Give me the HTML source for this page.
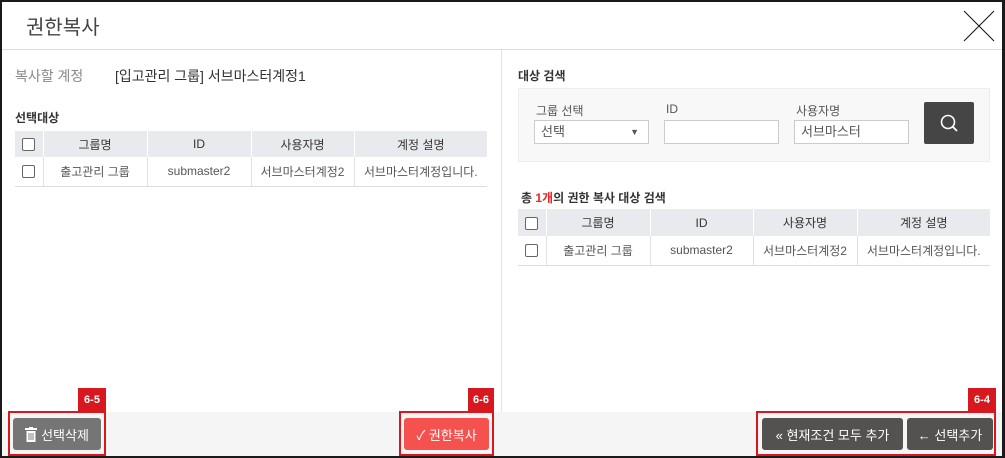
<!DOCTYPE html><html><head><meta charset="utf-8"><style>
*{box-sizing:border-box;margin:0;padding:0}
body{width:1005px;height:458px;font-family:"Liberation Sans","Noto Sans CJK KR",sans-serif;background:#1a1a1a;position:relative;overflow:hidden;color:#333}
.a{position:absolute}
.win{left:2px;top:2px;width:1000px;height:454px;background:#fff}
table{border-collapse:collapse;font-size:12px;color:#555;table-layout:fixed}
th{background:#e9eaee;font-weight:normal;height:26px;border-left:1px solid #fff;color:#333}
td{height:29px;text-align:center;border-left:1px solid #e2e2e2;border-bottom:1px solid #ddd}
th:first-child,td:first-child{border-left:none}
.cb{display:inline-block;width:13px;height:13px;border:1px solid #666;border-radius:2px;vertical-align:middle;background:#fff}
.inp{height:24px;border:1px solid #ccc;background:#fff;font-size:13px;padding:0 6px;line-height:22px;color:#555}
.lbl{font-size:12px;color:#555}
.btn{color:#fff;font-size:13px;border-radius:3px;display:flex;align-items:center;justify-content:center}
.tag{background:#d7191f;color:#fff;font-size:11px;font-weight:bold;text-align:center;line-height:24px}
.out{border:2px solid #d7191f}
</style></head><body>
<div class="a win"></div>
<div class="a" style="left:26px;top:11px;font-size:20px;color:#444">권한복사</div>
<svg class="a" style="left:962px;top:9px" width="34" height="34"><path d="M2 2L32 32M32 2L2 32" stroke="#111" stroke-width="1"/></svg>
<div class="a" style="left:2px;top:49px;width:1000px;height:1px;background:#ddd"></div>
<div class="a" style="left:501px;top:50px;width:1px;height:406px;background:#e2e2e2"></div>
<div class="a" style="left:2px;top:412px;width:1000px;height:44px;background:#f5f5f5"></div>
<div class="a" style="left:15px;top:66px;font-size:14px;color:#888">복사할 계정</div>
<div class="a" style="left:115px;top:66px;font-size:14px;color:#333">[입고관리 그룹] 서브마스터계정1</div>
<div class="a" style="left:15px;top:109px;font-size:12px;font-weight:bold;color:#333">선택대상</div>
<table class="a" style="left:15px;top:131px;width:472px"><colgroup><col width="28"><col width="104"><col width="104"><col width="103"><col width="133"></colgroup>
<tr><th><span class="cb"></span></th><th>그룹명</th><th>ID</th><th>사용자명</th><th>계정 설명</th></tr>
<tr><td><span class="cb"></span></td><td>출고관리 그룹</td><td>submaster2</td><td>서브마스터계정2</td><td>서브마스터계정입니다.</td></tr></table>
<div class="a" style="left:518px;top:67px;font-size:12px;font-weight:bold;color:#333">대상 검색</div>
<div class="a" style="left:518px;top:88px;width:472px;height:74px;background:#f8f8f8;border:1px solid #eee"></div>
<div class="a lbl" style="left:536px;top:102px">그룹 선택</div>
<div class="a lbl" style="left:666px;top:102px">ID</div>
<div class="a lbl" style="left:796px;top:102px">사용자명</div>
<div class="a inp" style="left:534px;top:120px;width:115px">선택<span style="position:absolute;right:9px;top:0;font-size:9px">▼</span></div>
<div class="a inp" style="left:664px;top:120px;width:115px"></div>
<div class="a inp" style="left:794px;top:120px;width:115px">서브마스터</div>
<div class="a" style="left:924px;top:102px;width:50px;height:42px;background:#454545;border-radius:2px"><svg width="50" height="42"><circle cx="24" cy="20" r="6.5" fill="none" stroke="#fff" stroke-width="1.6"/><path d="M28.5 24.5L33 29" stroke="#fff" stroke-width="1.8"/></svg></div>
<div class="a" style="left:521px;top:189px;font-size:12px;font-weight:bold;color:#333">총 <span style="color:#e22">1개</span>의 권한 복사 대상 검색</div>
<table class="a" style="left:518px;top:209px;width:472px"><colgroup><col width="28"><col width="104"><col width="103"><col width="104"><col width="133"></colgroup>
<tr><th style="height:27px"><span class="cb"></span></th><th>그룹명</th><th>ID</th><th>사용자명</th><th>계정 설명</th></tr>
<tr><td style="height:28px"><span class="cb"></span></td><td>출고관리 그룹</td><td>submaster2</td><td>서브마스터계정2</td><td>서브마스터계정입니다.</td></tr></table>
<div class="a tag" style="left:78px;top:388px;width:28px">6-5</div>
<div class="a out" style="left:8px;top:411px;width:98px;height:45px"></div>
<div class="a btn" style="left:13px;top:418px;width:88px;height:32px;background:#757575"><svg width="12" height="15" style="margin-right:4px"><rect x="0" y="1" width="12" height="2" fill="#fff"/><rect x="4" y="0" width="4" height="2" fill="#fff"/><rect x="1.5" y="4" width="9" height="11" fill="#fff"/><path d="M4 6V13M6 6V13M8 6V13" stroke="#757575" stroke-width="0.9"/></svg>선택삭제</div>
<div class="a tag" style="left:468px;top:388px;width:26px">6-6</div>
<div class="a out" style="left:399px;top:411px;width:95px;height:45px"></div>
<div class="a btn" style="left:404px;top:418px;width:85px;height:32px;background:#f5514e">✓&nbsp;권한복사</div>
<div class="a tag" style="left:968px;top:388px;width:28px">6-4</div>
<div class="a out" style="left:756px;top:411px;width:240px;height:45px"></div>
<div class="a btn" style="left:762px;top:418px;width:141px;height:32px;background:#545250">«&nbsp;현재조건 모두 추가</div>
<div class="a btn" style="left:907px;top:418px;width:86px;height:32px;background:#545250">←&nbsp;선택추가</div>
</body></html>
